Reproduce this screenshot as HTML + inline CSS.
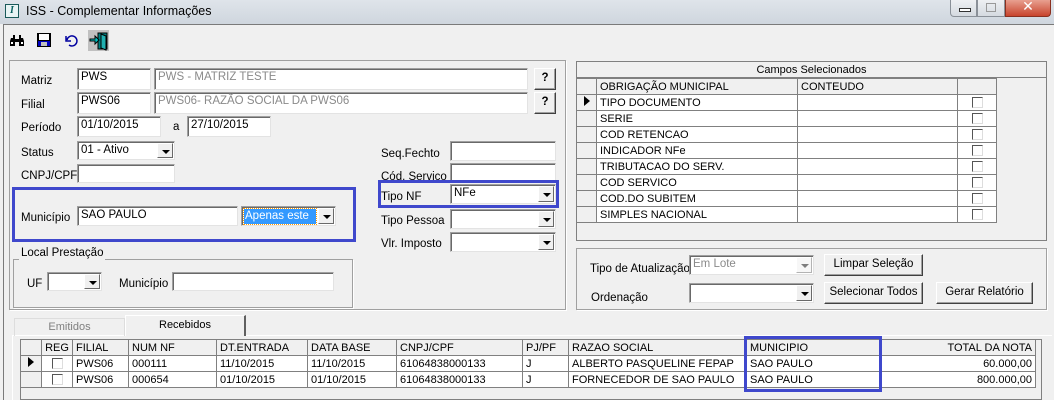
<!DOCTYPE html>
<html><head><meta charset="utf-8"><style>
*{box-sizing:border-box;margin:0;padding:0}
body{width:1054px;height:400px;overflow:hidden;background:#f0f0f0;font-family:"Liberation Sans",Arial,sans-serif;font-size:11.5px;color:#000;position:relative}
.a{position:absolute}
.lbl{position:absolute;font-size:11.5px;white-space:nowrap;line-height:14px}
.in{position:absolute;background:#fff;border:1px solid #a0a0a0;border-right-color:#e3e3e3;border-bottom-color:#e3e3e3;box-shadow:inset 1px 1px 0 #696969;font-size:11.5px;padding:2px 0 0 3px;white-space:nowrap;overflow:hidden}
.ro{color:#8a8a8a}
.cb .arr{position:absolute;right:1px;top:1px;bottom:1px;width:16px;background:#f0f0f0;border:1px solid #fff;border-right-color:#696969;border-bottom-color:#696969}
.cb .arr:after{content:"";position:absolute;left:4px;top:6px;border-left:4px solid transparent;border-right:4px solid transparent;border-top:4px solid #000}
.btn{position:absolute;background:#f0f0f0;border:1px solid #fff;border-right-color:#404040;border-bottom-color:#404040;box-shadow:inset -1px -1px 0 #a0a0a0;text-align:center;font-size:11.5px;line-height:18px}
.grp{position:absolute;border:1px solid #a0a0a0;box-shadow:1px 1px 0 #fff}
table{border-collapse:collapse;font-size:11px;position:absolute;table-layout:fixed}
td{border:1px solid #808080;height:16px;padding:0 3px;white-space:nowrap;line-height:14px;overflow:hidden}
.hd td{background:#f0f0f0}
.ind{background:#f0f0f0;width:20px}
.chk{display:inline-block;width:11px;height:11px;border:1px solid #555;border-right-color:#ddd;border-bottom-color:#ddd;background:#fff;vertical-align:middle}
.tri{display:inline-block;border-top:5px solid transparent;border-bottom:5px solid transparent;border-left:6px solid #000;margin-left:4px}
.blue{position:absolute;border:3px solid #3f48cc}
</style></head><body>
<div class="a" style="left:0;top:0;width:1054px;height:24px;background:linear-gradient(#dfe4ea,#cfd6de)"></div>
<div class="a" style="left:5px;top:4px;width:14px;height:14px;border:1px solid #1a5a5a;background:#e8f4f4;font:bold italic 10px 'Liberation Serif';color:#0a6060;text-align:center;line-height:12px">I</div>
<div class="lbl" style="left:26px;top:4px;font-size:12.5px">ISS - Complementar Informações</div>
<div class="a" style="left:950px;top:0;width:27px;height:17px;border:1px solid #8a9098;border-top:none;border-radius:0 0 0 4px;background:linear-gradient(#eef0f3,#d5dae0)"><div class="a" style="left:8px;top:8px;width:12px;height:4px;border:1px solid #333;background:#fff"></div></div>
<div class="a" style="left:977px;top:0;width:28px;height:17px;border:1px solid #8a9098;border-top:none;background:linear-gradient(#eef0f3,#d5dae0)"><div class="a" style="left:8px;top:3px;width:10px;height:9px;border:1px solid #999"></div></div>
<div class="a" style="left:1005px;top:0;width:46px;height:17px;border:1px solid #8a3020;border-top:none;border-radius:0 0 4px 0;background:linear-gradient(#e8a090,#c8442c);color:#fff;font:bold 14px 'DejaVu Sans';text-align:center;line-height:15px">✕</div>
<div class="a" style="left:3px;top:24px;width:1051px;height:376px;border-left:1px solid #7a7a7a;border-top:1px solid #7a7a7a;background:#f0f0f0"></div>
<svg class="a" style="left:9px;top:32px" width="16" height="16" viewBox="0 0 16 16"><path d="M2 6h4v8H1V9zM10 6h4l1 3v5h-5zM4 3h2v3H4zM10 3h2v3h-2zM6 7h4v3H6z" fill="#000"/><rect x="2" y="10" width="2" height="2" fill="#fff"/><rect x="12" y="10" width="2" height="2" fill="#fff"/></svg>
<svg class="a" style="left:36px;top:32px" width="16" height="16"><rect x="1" y="1" width="14" height="14" fill="#000"/><rect x="3" y="2" width="10" height="6" fill="#fff"/><rect x="2" y="9" width="12" height="5" fill="#0000c0"/><rect x="5" y="10" width="6" height="4" fill="#c0c0c0"/></svg>
<svg class="a" style="left:63px;top:33px" width="16" height="14"><path d="M3 3v5h5M4 7a5 5 0 1 1 2 5" stroke="#0000a0" stroke-width="1.5" fill="none"/></svg>
<div class="a" style="left:88px;top:30px;width:21px;height:21px;background:#c0c0c0"></div>
<svg class="a" style="left:89px;top:31px" width="20" height="20"><path d="M9 2h9v16H9z" fill="#008080" stroke="#000"/><path d="M12 3l5 2v14l-5-2z" fill="#20b0b0" stroke="#000"/><path d="M1 8h5V5l4 4-4 4v-3H1z" fill="#00c0c0" stroke="#000"/></svg>
<div class="grp" style="left:9px;top:60px;width:557px;height:250px"></div>
<div class="lbl" style="left:21px;top:74px">Matriz</div>
<div class="in" style="left:77px;top:68px;width:74px;height:22px">PWS</div>
<div class="in ro" style="left:154px;top:68px;width:374px;height:22px">PWS - MATRIZ TESTE</div>
<div class="btn" style="left:534px;top:68px;width:22px;height:22px;font-weight:bold">?</div>
<div class="lbl" style="left:21px;top:98px">Filial</div>
<div class="in" style="left:77px;top:92px;width:74px;height:22px">PWS06</div>
<div class="in ro" style="left:154px;top:92px;width:374px;height:22px">PWS06- RAZÃO SOCIAL DA PWS06</div>
<div class="btn" style="left:534px;top:92px;width:22px;height:22px;font-weight:bold">?</div>
<div class="lbl" style="left:21px;top:121px">Período</div>
<div class="in" style="left:77px;top:116px;width:84px;height:21px">01/10/2015</div>
<div class="lbl" style="left:173px;top:120px">a</div>
<div class="in" style="left:187px;top:116px;width:84px;height:21px">27/10/2015</div>
<div class="lbl" style="left:21px;top:146px">Status</div>
<div class="in cb" style="left:77px;top:141px;width:98px;height:19px">01 - Ativo<div class="arr"></div></div>
<div class="lbl" style="left:21px;top:169px">CNPJ/CPF</div>
<div class="in" style="left:77px;top:164px;width:98px;height:19px"></div>
<div class="blue" style="left:12px;top:187px;width:344px;height:55px"></div>
<div class="lbl" style="left:21px;top:211px">Município</div>
<div class="in" style="left:77px;top:206px;width:161px;height:20px">SAO PAULO</div>
<div class="in cb" style="left:241px;top:206px;width:95px;height:20px;padding:1px"><div class="a" style="left:2px;top:2px;width:72px;height:15px;background:#3399ff;outline:1px dotted #f90;color:#fff;padding-left:1px;line-height:14px">Apenas este</div><div class="arr"></div></div>
<div class="grp" style="left:13px;top:259px;width:340px;height:49px"></div>
<div class="lbl" style="left:19px;top:246px;background:#f0f0f0;padding:0 2px">Local Prestação</div>
<div class="lbl" style="left:27px;top:277px">UF</div>
<div class="in cb" style="left:47px;top:272px;width:55px;height:19px"><div class="arr"></div></div>
<div class="lbl" style="left:119px;top:277px">Município</div>
<div class="in" style="left:172px;top:272px;width:162px;height:19px"></div>
<div class="lbl" style="left:381px;top:147px">Seq.Fechto</div>
<div class="in" style="left:450px;top:141px;width:106px;height:20px"></div>
<div class="lbl" style="left:381px;top:170px">Cód. Serviço</div>
<div class="in" style="left:450px;top:163px;width:106px;height:20px"></div>
<div class="blue" style="left:378px;top:180px;width:181px;height:28px"></div>
<div class="lbl" style="left:381px;top:190px">Tipo NF</div>
<div class="in cb" style="left:450px;top:184px;width:106px;height:20px">NFe<div class="arr"></div></div>
<div class="lbl" style="left:381px;top:214px">Tipo Pessoa</div>
<div class="in cb" style="left:450px;top:209px;width:106px;height:20px"><div class="arr"></div></div>
<div class="lbl" style="left:381px;top:237px">Vlr. Imposto</div>
<div class="in cb" style="left:450px;top:232px;width:106px;height:20px"><div class="arr"></div></div>
<div class="a" style="left:576px;top:61px;width:471px;height:180px;border:1px solid #808080;background:#f0f0f0"></div>
<div class="a" style="left:577px;top:62px;width:469px;height:16px;border-bottom:1px solid #808080;text-align:center;font-size:11px;line-height:16px">Campos Selecionados</div>
<table style="left:576px;top:78px;background:#fff">
<tr class="hd"><td class="ind"></td><td style="width:201px">OBRIGAÇÃO MUNICIPAL</td><td style="width:160px">CONTEUDO</td><td style="width:39px"></td></tr>
<tr><td class="ind"><span class="tri"></span></td><td>TIPO DOCUMENTO</td><td></td><td style="text-align:center"><span class="chk"></span></td></tr>
<tr><td class="ind"></td><td>SERIE</td><td></td><td style="text-align:center"><span class="chk"></span></td></tr>
<tr><td class="ind"></td><td>COD RETENCAO</td><td></td><td style="text-align:center"><span class="chk"></span></td></tr>
<tr><td class="ind"></td><td>INDICADOR NFe</td><td></td><td style="text-align:center"><span class="chk"></span></td></tr>
<tr><td class="ind"></td><td>TRIBUTACAO DO SERV.</td><td></td><td style="text-align:center"><span class="chk"></span></td></tr>
<tr><td class="ind"></td><td>COD SERVICO</td><td></td><td style="text-align:center"><span class="chk"></span></td></tr>
<tr><td class="ind"></td><td>COD.DO SUBITEM</td><td></td><td style="text-align:center"><span class="chk"></span></td></tr>
<tr><td class="ind"></td><td>SIMPLES NACIONAL</td><td></td><td style="text-align:center"><span class="chk"></span></td></tr>
</table>
<div class="grp" style="left:576px;top:248px;width:471px;height:62px"></div>
<div class="lbl" style="left:590px;top:262px">Tipo de Atualização</div>
<div class="in cb ro" style="left:689px;top:255px;width:125px;height:20px">Em Lote<div class="arr" style="opacity:.5"></div></div>
<div class="btn" style="left:824px;top:254px;width:99px;height:22px">Limpar Seleção</div>
<div class="lbl" style="left:591px;top:291px">Ordenação</div>
<div class="in cb" style="left:689px;top:283px;width:125px;height:20px"><div class="arr"></div></div>
<div class="btn" style="left:824px;top:282px;width:99px;height:22px">Selecionar Todos</div>
<div class="btn" style="left:936px;top:282px;width:97px;height:22px">Gerar Relatório</div>
<div class="a" style="left:12px;top:335px;width:1040px;height:65px;border-left:1px solid #fff;border-top:1px solid #fff;background:#f0f0f0"></div>
<div class="a" style="left:14px;top:318px;width:111px;height:18px;border:1px solid #ddd;border-bottom:none;color:#808080;text-align:center;font-size:11px;line-height:17px">Emitidos</div>
<div class="a" style="left:125px;top:315px;width:121px;height:21px;background:#f0f0f0;border-left:1px solid #fff;border-top:1px solid #fff;border-right:2px solid #606060;text-align:center;font-size:11px;line-height:18px">Recebidos</div>
<div class="a" style="left:20px;top:339px;width:1022px;height:61px;border:1px solid #808080;background:#f0f0f0"></div>
<table style="left:20px;top:339px;background:#fff">
<tr class="hd"><td class="ind" style="width:21px"></td><td style="width:31px;text-align:center">REG</td><td style="width:56px">FILIAL</td><td style="width:88px">NUM NF</td><td style="width:91px">DT.ENTRADA</td><td style="width:89px">DATA BASE</td><td style="width:126px">CNPJ/CPF</td><td style="width:46px">PJ/PF</td><td style="width:178px">RAZAO SOCIAL</td><td style="width:134px">MUNICIPIO</td><td style="width:155px;text-align:right">TOTAL DA NOTA</td></tr>
<tr><td class="ind"><span class="tri"></span></td><td style="text-align:center"><span class="chk"></span></td><td>PWS06</td><td>000111</td><td>11/10/2015</td><td>11/10/2015</td><td>61064838000133</td><td>J</td><td>ALBERTO PASQUELINE FEPAP</td><td>SAO PAULO</td><td style="text-align:right">60.000,00</td></tr>
<tr><td class="ind"></td><td style="text-align:center"><span class="chk"></span></td><td>PWS06</td><td>000654</td><td>01/10/2015</td><td>01/10/2015</td><td>61064838000133</td><td>J</td><td>FORNECEDOR DE SAO PAULO</td><td>SAO PAULO</td><td style="text-align:right">800.000,00</td></tr>
</table>
<div class="blue" style="left:744px;top:336px;width:138px;height:56px"></div>
</body></html>
